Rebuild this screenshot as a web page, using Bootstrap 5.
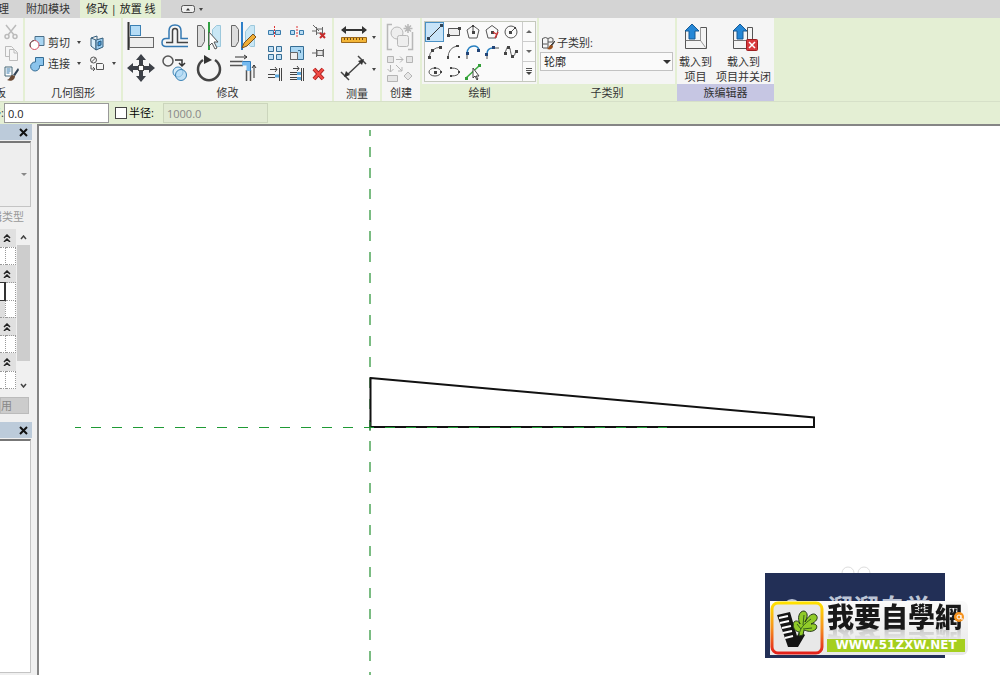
<!DOCTYPE html>
<html lang="zh-CN">
<head>
<meta charset="utf-8">
<meta name="viewport" content="width=device-width, initial-scale=1">
<title>修改 | 放置 线</title>
<link href="https://cdn.jsdelivr.net/npm/bootstrap@5.3.0/dist/css/bootstrap.min.css" rel="stylesheet">
<style>
  :root { --leaf: #e4efd4; --pane: #f5f5f5; }
  body { font: 11px/16px "Open Sans", "Noto Sans CJK SC", sans-serif; color: #333; background: #f0f0f0; }
  svg { display: block; flex: none; }
  button { font: inherit; color: inherit; background: none; border: 0; padding: 0; }
  .tabs { background: #d4d4d4; height: 18px; }
  .tabs a { color: #333; text-decoration: none; padding: 1px 10px; white-space: nowrap; }
  .tabs .first-tab { width: 16px; padding: 1px 7px 1px 0; overflow: hidden; }
  .tabs a.current { background: var(--leaf); padding: 1px 6px; width: 81px; color: #222; }
  .ribbon { background: var(--leaf); height: 84px; gap: 2px; border-bottom: 1px solid #d6e0c8; }
  .panel { background: var(--pane); flex: none; overflow: hidden; }
  .panel-title { height: 17px; line-height: 18px; text-align: center; white-space: nowrap; }
  .panel-title.leaf { background: var(--leaf); }
  .panel-title.lilac { background: #c6c6e3; }
  .w-clip { width: 23px; } .w-geo { width: 96px; } .w-mod { width: 209px; } .w-mea { width: 46px; }
  .w-new { width: 38px; } .w-draw { width: 115px; } .w-sub { width: 136px; } .w-fam { width: 97px; }
  .w-clip .panel-title { width: 6px; }
  .icons { display: grid; place-items: center; align-content: start; }
  .icons button { display: grid; place-items: center; width: 100%; height: 100%; }
  .clip-grid { grid: 21px 21px 21px / 22px; padding-top: 3px; }
  .big-grid { grid: 32px 32px / repeat(4, 34px); padding: 2px 0 0 1px; }
  .small-grid { grid: repeat(3, 21px) / repeat(3, 22px); padding: 3px 0 0 4px; }
  .wide-grid { grid: 32px 32px / 42px; padding-top: 3px; }
  .new-grid { grid: 33px 31px / 36px; padding-top: 2px; }
  .caret { width: 0; height: 0; border: 2px solid transparent; border-top: 3px solid #444; border-bottom: 0; flex: none; }
  .geo-rows { padding-top: 14px; }
  .geo-row { height: 21px; padding-left: 4px; }
  .geo-row button { display: flex; align-items: center; gap: 3px; }
  .geo-row .caret { margin-left: 4px; }
  .gallery { border: 1px solid #c4c8bd; background: #fafafa; height: 61px; margin: 3px 1px 0 2px; }
  .gallery .icons { grid: repeat(3, 20px) / repeat(5, 19px); flex: 1; }
  .gallery .on { background: #c8e4f8; border: 1px solid #4a90c4; }
  .gallery .steps { width: 13px; border-left: 1px solid #ccc; }
  .gallery .steps button { flex: 1; border-bottom: 1px solid #ccc; display: grid; place-items: center; }
  .sub-label { height: 18px; gap: 2px; padding-left: 2px; }
  .select-wrap { width: 133px; margin-left: 1px; }
  .select-wrap::after { content: ""; position: absolute; right: 2px; top: 8px; border: 4px solid transparent; border-top-color: #333; border-bottom: 0; pointer-events: none; }
  .sub-select { width: 100%; height: 19px; border: 1px solid #c2c2c2; background: #fafafa; appearance: none; font: inherit; color: #222; padding: 0 3px; border-radius: 0; }
  .fam { padding: 4px 0 0 2px; gap: 4px; }
  .fam-btn { display: flex; flex-direction: column; align-items: center; line-height: 15px; white-space: nowrap; }
  .options { background: var(--leaf); height: 22px; }
  .options .offset-label { width: 4px; }
  .options .radius-label { width: 34px; margin-left: 2px; }
  .options input[type=text] { font: inherit; border: 1px solid #999; border-radius: 0; height: 20px; width: 105px; padding: 0 3px; background: #fff; color: #222; outline: 0; }
  .options input[type=text]:disabled { background: #e1ead3; border-color: #cbd5bc; color: #888; }
  .options input[type=checkbox] { appearance: none; width: 12px; height: 12px; border: 1px solid #444; background: #fff; margin: 0 0 0 6px; }
  .options input:checked { background: #444; }
  .side { width: 37px; flex: none; background: #f0f0f0; }
  .side-head { background: #bccbda; height: 16px; width: 32px; }
  .selector { width: 31px; height: 66px; border: solid #c4c4c4; border-width: 2px 1px 1px 0; border-top-color: #777; background: #eee; margin: 1px 0 2px; padding-right: 3px; }
  .edit-type { width: 24px; overflow: hidden; white-space: nowrap; color: #999; height: 16px; }
  .prop-box { height: 164px; }
  .props { width: 16px; height: 160px; background: #fff; border-collapse: collapse; table-layout: fixed; }
  .props .name-col { width: 5px; }
  .props th { background: #e0e0e0; height: 18px; padding: 0 0 0 3px; }
  .props td { height: 17px; padding: 0; border: 1px dotted #999; border-left: 0; }
  .props td.focus { border: solid #333; border-width: 1px 2px 1px 0; }
  .props td.grip { background: #ddd; }
  .scroller { width: 13px; margin-left: 1px; }
  .scroller .thumb { background: #cdcdcd; height: 116px; }
  .scroller button { height: 16px; display: grid; place-items: center; }
  .apply { width: 29px; height: 17px; background: #ccc; border: 1px solid #bbb; color: #888; overflow: hidden; }
  .board { background: #fff; border-left: 2px solid #858585; border-top: 2px solid #858585; min-width: 0; overflow: hidden; }
  .stamp { position: absolute; right: 33px; bottom: 17px; width: 202px; height: 92px; }
  .stamp .rings { position: absolute; left: 76px; top: 0; }
  .stamp .dot { position: absolute; left: 17px; top: 25px; }
  .navy { position: absolute; left: 0; top: 7px; width: 180px; height: 85px; background: #222f56; color: #bcc4d5; overflow: hidden; padding: 19px 0 0 62px; font-size: 26px; line-height: 32px; font-weight: 700; white-space: nowrap; }
  .brand { position: absolute; left: 5px; top: 35px; width: 198px; height: 54px; background: linear-gradient(#fafafa, #e8e8e8); border-radius: 0 6px 6px 0; overflow: hidden; }
  .brand-name { position: absolute; left: 57px; top: 0; font: 900 27px/30px "Noto Sans CJK TC", sans-serif; color: #191919; white-space: nowrap; -webkit-box-reflect: below -5px linear-gradient(transparent 50%, rgba(0, 0, 0, .25)); }
  .brand .at { position: absolute; right: 3px; top: 10px; }
  .brand-url { position: absolute; left: 57px; top: 38px; width: 138px; height: 13px; background: #a5cf1f; color: #fff; font: bold 12px/13px "DejaVu Sans", sans-serif; text-align: center; text-decoration: none; white-space: nowrap; }
</style>
</head>
<body class="d-flex flex-column vh-100 overflow-hidden">
<nav class="tabs d-flex" aria-label="功能区">
  <a class="first-tab d-flex justify-content-end" href="#"><span>管理</span></a>
  <a href="#">附加模块</a>
  <a class="current" href="#">修改 | 放置 线</a>
  <button class="d-flex align-items-center gap-1 ms-3 ps-1" aria-label="显示面板">
    <svg width="14" height="8" viewBox="0 0 14 8"><rect x=".5" y=".5" width="13" height="7" rx="2" fill="#eee" stroke="#555"/><path d="M5 5.500 7 3l2 2.500z" fill="#333"/></svg><span class="caret"></span>
  </button>
</nav>

<header class="ribbon d-flex">
  <section class="panel w-clip d-flex flex-column">
    <div class="icons clip-grid flex-grow-1">
      <button aria-label="剪切到剪贴板"><svg width="16" height="16" fill="none" stroke="#bbb" stroke-width="1.500"><path d="M3 1l8 10M13 1 5 11"/><circle cx="4" cy="12.500" r="2"/><circle cx="12" cy="12.500" r="2"/></svg></button>
      <button aria-label="复制"><svg width="16" height="16" fill="#f5f5f5" stroke="#bbb"><path d="M2.500 1.500h6l2 2v8h-8z"/><path d="M6.500 4.500h5l3 3v8h-8zM11 5v3h3"/></svg></button>
      <button aria-label="匹配类型"><svg width="16" height="16"><path d="M2 1h7v9H2z" fill="#fff" stroke="#467"/><path d="M3.500 3h4M3.500 5h4M3.500 7h3" stroke="#37a"/><path d="M15 2 10 9l2 1 4-6z" fill="#345"/><path d="M9 9c-2 1-2 4-5 5 4 2 8 0 8-4z" fill="#6a4a35"/></svg></button>
    </div>
    <div class="panel-title d-flex justify-content-end">剪贴板</div>
  </section>

  <section class="panel w-geo d-flex flex-column">
    <div class="geo-rows flex-grow-1">
      <div class="geo-row d-flex">
        <button><svg width="16" height="16"><path d="M6 1.500h9v9H6z" fill="#a9d5f2" stroke="#4b6f89"/><circle cx="5.500" cy="10" r="4.500" fill="#fff" stroke="#d34d60"/><path d="M1.500 12A4.500 4.500 0 0 1 5 5.500" fill="none" stroke="#555"/></svg>剪切<span class="caret"></span></button>
        <button class="ms-2" aria-label="拆分面"><svg width="16" height="16" stroke="#345d7a"><path d="M2 3l5 2v10l-5-4z" fill="#d8edf9"/><path d="M7 5l7-2v9l-7 3z" fill="#9bcdf0"/><path d="M9 7l3-1v4l-3 1z" fill="#3f9be0"/><path d="M2 3l6-2v3" fill="none"/></svg></button>
      </div>
      <div class="geo-row d-flex">
        <button><svg width="16" height="16"><path d="M6.500 1.500h8v8h-4A4.500 4.500 0 1 1 6.500 6z" fill="#8bc4ec" stroke="#346c94"/></svg>连接<span class="caret"></span></button>
        <button class="ms-2" aria-label="连接端切割"><svg width="16" height="16" fill="none" stroke="#555"><circle cx="4.500" cy="4" r="3"/><path d="M2.500 6l4-4M7.500 7.500h6l1 1v5h-7zM2 9v4h4M4 11l2 2-2 2"/></svg><span class="caret"></span></button>
      </div>
    </div>
    <div class="panel-title">几何图形</div>
  </section>

  <section class="panel w-mod d-flex flex-column">
    <div class="d-flex flex-grow-1">
      <div class="icons big-grid">
        <button aria-label="对齐"><svg width="28" height="28"><path d="M1.500 0v28" stroke="#333" stroke-width="2"/><rect x="3.500" y="3.500" width="10" height="10" fill="#b5dcf6" stroke="#3c80b3"/><rect x="2.500" y="15.500" width="24" height="10" fill="#eee" stroke="#666"/></svg></button>
        <button aria-label="偏移"><svg width="28" height="28" fill="none"><path d="M27 24.500H5q-4 0-4-4t4-4h3V9q0-6 6-6t6 6v7.500h7" stroke="#3479b3" stroke-width="1.500"/><path d="M27 20.500H16.500V9q0-2.500-2.500-2.500T11.500 9v11.500H5" stroke="#444" stroke-width="1.500"/></svg></button>
        <button aria-label="镜像 - 拾取轴"><svg width="28" height="28"><path d="M2.500 3.500h4l3 4v12l-3 5h-4z" fill="#ddd" stroke="#666"/><path d="M25.500 3.500h-4l-4 4v12l4 5h4z" fill="#c9e7f5" stroke="#9cc8dc"/><path d="M14 0v28" stroke="#31a041" stroke-width="2"/><path d="M14 10v14l3-3 3 6 2-1-3-6h4z" fill="#fff" stroke="#555"/></svg></button>
        <button aria-label="镜像 - 绘制轴"><svg width="28" height="28"><path d="M2.500 3.500h4l3 4v12l-3 5h-4z" fill="#ddd" stroke="#666"/><path d="M25.500 3.500h-4l-5 6v10l5 5h4z" fill="#c9e7f5" stroke="#9cc8dc"/><path d="M13 0v28" stroke="#2f80c9" stroke-width="2"/><path d="M13 26l2-5 9-9 3 3-9 9z" fill="#f0ae36" stroke="#765020"/></svg></button>
        <button aria-label="移动"><svg width="28" height="28" fill="#3d4148"><path d="M14 0l5 6h-3v5h-4V6H9zM14 28l5-6h-3v-5h-4v5H9zM0 14l6-5v3h5v4H6v3zM28 14l-6-5v3h-5v4h5v3z"/><rect x="11.500" y="11.500" width="5" height="5" fill="#fff" stroke="#444"/></svg></button>
        <button aria-label="复制"><svg width="28" height="28"><circle cx="7" cy="7" r="5" fill="#f5f5f5" stroke="#555" stroke-width="1.500"/><path d="M14 6h7v5m-3-2 3 3 3-3" fill="none" stroke="#333" stroke-width="1.500"/><circle cx="17" cy="18" r="5" fill="#d6ecfa" stroke="#3b83b5"/><circle cx="20" cy="21" r="5.500" fill="#a9d7f5" fill-opacity=".7" stroke="#3b83b5"/></svg></button>
        <button aria-label="旋转"><svg width="28" height="28"><path d="M8 6A11 11 0 1 0 20 6" fill="none" stroke="#444" stroke-width="2.500"/><path d="M9 1v9l8-4z" fill="#333"/></svg></button>
        <button aria-label="修剪/延伸为角"><svg width="28" height="28" fill="none"><path d="M1 7.500h13M1 11.500h13M17.500 16v11M21.500 16v11" stroke="#555" stroke-width="1.500"/><path d="M13 9.500h6.500V17" stroke="#75baf0" stroke-width="4"/><path d="M14 7.500h7.500V17" stroke="#2e79b8"/><path d="M6 3h12m-3-2 3 2-3 2M25 24V11m-2 3 2-3 2 3" stroke="#333"/></svg></button>
      </div>
      <div class="icons small-grid">
        <button aria-label="拆分图元"><svg width="16" height="16"><path d="M1.500 6.500h5v4h-5zM8.500 6.500h5v4h-5z" fill="#b9dcf3" stroke="#387bab"/><path d="M7.500 2v12" stroke="#d33" stroke-dasharray="2 1"/></svg></button>
        <button aria-label="用间隙拆分"><svg width="16" height="16"><path d="M1.500 6.500h4v4h-4zM10.500 6.500h4v4h-4z" fill="#b9dcf3" stroke="#387bab"/><path d="M8 2v12" stroke="#d33" stroke-dasharray="2 1"/></svg></button>
        <button aria-label="解锁"><svg width="16" height="16" fill="none" stroke="#666"><path d="M1 7h4M5.500 3v8M6 5h5M6 9h5M11.500 3v8M2 1l6 6"/><path d="M9 9l5 5M14 9l-5 5" stroke="#c62a2a" stroke-width="2"/></svg></button>
        <button aria-label="阵列"><svg width="16" height="16" fill="#c0e0f6" stroke="#356d94"><path d="M1.500 1.500h5v5h-5zM9.500 1.500h5v5h-5zM1.500 9.500h5v5h-5zM9.500 9.500h5v5h-5z"/></svg></button>
        <button aria-label="缩放"><svg width="16" height="16"><path d="M1.500 1.500h13v13h-13z" fill="#a9d6f2" stroke="#356d94"/><path d="M1.500 7.500h7v7h-7z" fill="#eee" stroke="#666"/><path d="M9 5.500h2.500V8" fill="none" stroke="#356d94"/></svg></button>
        <button aria-label="锁定"><svg width="16" height="16" fill="#e5e5e5" stroke="#666"><path d="M1 8h4M5.500 4v8M6 5.500h6v5H6zM12.500 4v8"/></svg></button>
        <button aria-label="修剪单个图元"><svg width="16" height="16" fill="none" stroke="#444"><path d="M3 3.500h7M8 1l2 2.500L8 6M1 8.500h7M1 11.500h7"/><path d="M8 10h4" stroke="#5ba8dd" stroke-width="3"/><path d="M12.500 2v13M14.500 2v13"/></svg></button>
        <button aria-label="修剪多个图元"><svg width="16" height="16" fill="none" stroke="#444"><path d="M4 2.500h6M8 0l2 2.500L8 5M1 6.500h7M1 8.500h7M1 11.500h7M1 13.500h7"/><path d="M8 7.500h4M8 12.500h4" stroke="#5ba8dd" stroke-width="3"/><path d="M12.500 2v13M14.500 2v13"/></svg></button>
        <button aria-label="删除"><svg width="16" height="16"><path d="M3 3l9 10M12 3 3 13" stroke="#a92222" stroke-width="4"/><path d="M3 3l9 10M12 3 3 13" stroke="#f24b45" stroke-width="2"/></svg></button>
      </div>
    </div>
    <div class="panel-title">修改</div>
  </section>

  <section class="panel w-mea d-flex flex-column">
    <div class="icons wide-grid flex-grow-1">
      <button class="d-flex align-items-center justify-content-end gap-1" aria-label="测量"><svg width="28" height="28"><path d="M2 7h24" stroke="#333" stroke-width="2"/><path d="M1 7l5-4v8zM27 7l-5-4v8z" fill="#333"/><path d="M1.500 14.500h25v5h-25z" fill="#f3b536" stroke="#9b681c"/><path d="M4.500 15v2M7.500 15v2M10.500 15v2M13.500 15v2M16.500 15v2M19.500 15v2M22.500 15v2" stroke="#704a16"/></svg><span class="caret"></span></button>
      <button class="d-flex align-items-center justify-content-end gap-1" aria-label="对齐尺寸标注"><svg width="28" height="28"><path d="M6 21 22 6M1 17l8 8M18 1l8 8" stroke="#444" stroke-width="1.500"/><path d="M4 22l2-6 4 4zM24 4l-2 6-4-4z" fill="#333"/></svg><span class="caret"></span></button>
    </div>
    <div class="panel-title">测量</div>
  </section>

  <section class="panel w-new d-flex flex-column">
    <div class="icons new-grid flex-grow-1">
      <button aria-label="创建组"><svg width="28" height="28" fill="#eee" stroke="#b8b8b8"><path d="M6 1.500H1.500v25H6M22 26.500h4.500V9" fill="none" stroke-width="1.500"/><circle cx="11" cy="10" r="6"/><rect x="11.500" y="12.500" width="11" height="11" rx="2"/><path d="M22 1v9M17.500 5.500h9M19 2.500l6 6M25 2.500l-6 6" stroke-width="1.500"/></svg></button>
      <button aria-label="创建类似"><svg width="28" height="28" fill="#e6e6e6" stroke="#b5b5b5"><path d="M1.500 1.500h6v6h-6zM20.500 1.500h6v6h-6zM1.500 20.500h10v6h-10zM22 17l4 4-4 4-4-4z"/><path d="M10 4.500h7m-3-3 3 3-3 3M4.500 10v7m-3-3 3 3 3-3M10 10l6 6m0-4v4h-4" fill="none"/></svg></button>
    </div>
    <div class="panel-title">创建</div>
  </section>

  <section class="panel w-draw d-flex flex-column">
    <div class="flex-grow-1">
      <div class="gallery d-flex">
        <div class="icons">
          <button class="on" aria-label="线"><svg width="16" height="16"><path d="M2 14 14 2" stroke="#333"/><path d="M0 13h3v3H0zM13 0h3v3h-3z" fill="#345"/></svg></button>
          <button aria-label="矩形"><svg width="16" height="16"><path d="M2.500 4.500h11v7h-11z" fill="#eee" stroke="#555"/><path d="M1 10h3v3H1zM12 3h3v3h-3z" fill="#444"/></svg></button>
          <button aria-label="内接多边形"><svg width="16" height="16" fill="none" stroke="#555"><path d="M8 1.500 14 6l-2 8H4L2 6zM8 8V2"/><path d="M7 7h3v3H7zM7 1h2v2H7z" fill="#444" stroke="none"/></svg></button>
          <button aria-label="外接多边形"><svg width="16" height="16" fill="none" stroke="#555"><path d="M8 1.500 14 6l-2 8H4L2 6z"/><path d="M7 7h3v3H7z" fill="#444" stroke="none"/><path d="M9 8l3 2m2-2-3 6" stroke="#c33" stroke-width="1.500"/></svg></button>
          <button aria-label="圆形"><svg width="16" height="16" fill="none" stroke="#555"><circle cx="8" cy="8" r="6"/><path d="M8 8l4-4"/><path d="M6 7h3v3H6zM11 3h2v2h-2z" fill="#444" stroke="none"/></svg></button>
          <button aria-label="起点-终点-半径弧"><svg width="16" height="16"><path d="M2 14Q3 4 14 3" fill="none" stroke="#666"/><path d="M1 12h3v3H1zM4 5h3v3H4zM12 2h3v3h-3z" fill="#444"/></svg></button>
          <button aria-label="圆心-端点弧"><svg width="16" height="16"><path d="M2 14Q2 4 11 2" fill="none" stroke="#666"/><path d="M1 12h2v3H1zM10 1h3v2h-3zM12 12h2v2h-2z" fill="#444"/></svg></button>
          <button aria-label="相切弧"><svg width="16" height="16"><path d="M2 9Q3 2 9 2q4 0 5 4" fill="none" stroke="#277fc0" stroke-width="1.500"/><path d="M2 10v5" stroke="#444"/><path d="M1 8h3v3H1zM12 5h3v3h-3z" fill="#247"/></svg></button>
          <button aria-label="圆角弧"><svg width="16" height="16"><path d="M3 10q0-6 6-6" fill="none" stroke="#277fc0" stroke-width="1.500"/><path d="M3 10v5M9 4h6" stroke="#555"/><path d="M1 9h3v3H1zM8 2h3v3H8z" fill="#247"/></svg></button>
          <button aria-label="样条曲线"><svg width="16" height="16"><path d="M2 9C4 4 4 2 6 3s1 9 4 9 1-5 4-4" fill="none" stroke="#555"/><path d="M1 8h3v3H1zM4 2h3v3H4zM8 11h3v3H8zM12 6h3v3h-3z" fill="#444"/></svg></button>
          <button aria-label="椭圆"><svg width="16" height="16" fill="none" stroke="#555"><ellipse cx="8" cy="8" rx="6" ry="4"/><path d="M7 7h3v3H7zM7 3h2v2H7zM13 7h2v2h-2z" fill="#444" stroke="none"/></svg></button>
          <button aria-label="半椭圆"><svg width="16" height="16"><path d="M5 4q8 0 8 4t-8 4" fill="none" stroke="#555"/><path d="M4 3h2v2H4zM4 11h2v2H4zM12 7h2v2h-2z" fill="#444"/></svg></button>
          <button aria-label="拾取线"><svg width="16" height="16"><path d="M1 14 14 2" stroke="#38aa3c" stroke-width="1.500"/><path d="M0 13h3v3H0zM13 0h3v3h-3z" fill="#329f38"/><path d="M8 4v10l2-2 2 4 1-1-2-3h3z" fill="#fff" stroke="#444"/></svg></button>
        </div>
        <div class="steps d-flex flex-column">
          <button aria-label="上一行"><svg width="6" height="3"><path d="M0 3 3 0l3 3z" fill="#666"/></svg></button>
          <button aria-label="下一行"><svg width="6" height="3"><path d="M0 0l3 3 3-3z" fill="#666"/></svg></button>
          <button class="border-0" aria-label="更多"><svg width="6" height="7"><path d="M0 .5h6M0 2.500h6" stroke="#555"/><path d="M0 4l3 3 3-3z" fill="#444"/></svg></button>
        </div>
      </div>
    </div>
    <div class="panel-title leaf">绘制</div>
  </section>

  <section class="panel w-sub d-flex flex-column">
    <div class="flex-grow-1 pt-3">
      <label for="sub" class="sub-label d-flex align-items-center"><svg width="14" height="14"><path d="M1.500 12V2.500q3-2 5.500 0 3-2 5 0V6M7 3v9M1.500 8h5M7 6h5M2 12h5" fill="none" stroke="#555"/><path d="M14 5 9 10l1 1z" fill="#444" stroke="#444"/><path d="M10 9c-2 0-2 3-4 4 3 1 6 0 6-3z" fill="#98511f"/></svg>子类别:</label>
      <div class="select-wrap position-relative"><select id="sub" class="sub-select"><option>轮廓</option></select></div>
    </div>
    <div class="panel-title leaf">子类别</div>
  </section>

  <section class="panel w-fam d-flex flex-column">
    <div class="fam d-flex flex-grow-1 align-items-start">
      <button class="fam-btn"><svg width="28" height="32"><path d="M3.500 9V26.500h21v-21h-6v13h-15" fill="#f4f4f4" stroke="#555"/><path d="M18.500 5v13.500l5 7" fill="none" stroke="#999"/><path d="M3.500 18.500h15" stroke="#777"/><path d="M10 2l7 7h-4v8H7V9H3z" fill="#2587d6" stroke="#175b96"/></svg>载入到<br>项目</button>
      <button class="fam-btn"><svg width="28" height="32"><path d="M3.500 9V26.500h19v-21h-5v13h-14" fill="#f4f4f4" stroke="#555"/><path d="M3.500 18.500h14" stroke="#777"/><path d="M10 2l7 7h-4v8H7V9H3z" fill="#2587d6" stroke="#175b96"/><rect x="16.500" y="17.500" width="11" height="11" rx="1" fill="#d8373b" stroke="#9c1f22"/><path d="M19 20l6 6M25 20l-6 6" stroke="#fff" stroke-width="1.500"/></svg>载入到<br>项目并关闭</button>
    </div>
    <div class="panel-title lilac">族编辑器</div>
  </section>
</header>

<form class="options d-flex align-items-center">
  <label for="offset" class="offset-label d-flex justify-content-end overflow-hidden"><span class="text-nowrap">偏移:</span></label>
  <input id="offset" type="text" value="0.0">
  <input id="use-radius" type="checkbox"><label for="use-radius" class="radius-label text-black text-nowrap">半径:</label>
  <input type="text" value="1000.0" aria-label="半径值" disabled>
</form>

<div class="d-flex flex-grow-1 overflow-hidden">
  <aside class="side d-flex flex-column">
    <div class="side-head d-flex align-items-center justify-content-end pe-1"><button aria-label="关闭属性"><svg width="9" height="9"><path d="M1 1l7 7M8 1 1 8" stroke="#111" stroke-width="2"/></svg></button></div>
    <div class="selector d-flex align-items-center justify-content-end"><svg width="6" height="3"><path d="M0 0l3 3 3-3z" fill="#888"/></svg></div>
    <button class="edit-type d-flex justify-content-end"><span>编辑类型</span></button>
    <div class="prop-box d-flex align-items-start mt-1">
      <table class="props">
        <colgroup><col class="name-col"><col></colgroup>
        <tbody>
        <tr><th colspan="2"><svg width="8" height="8" fill="none" stroke="#222" stroke-width="1.500"><path d="M1 4l3-3 3 3M1 8l3-3 3 3"/></svg></th></tr>
        <tr><td></td><td></td></tr>
        <tr><th colspan="2"><svg width="8" height="8" fill="none" stroke="#222" stroke-width="1.500"><path d="M1 4l3-3 3 3M1 8l3-3 3 3"/></svg></th></tr>
        <tr><td class="focus"></td><td></td></tr>
        <tr><td class="grip"></td><td></td></tr>
        <tr><th colspan="2"><svg width="8" height="8" fill="none" stroke="#222" stroke-width="1.500"><path d="M1 4l3-3 3 3M1 8l3-3 3 3"/></svg></th></tr>
        <tr><td></td><td></td></tr>
        <tr><th colspan="2"><svg width="8" height="8" fill="none" stroke="#222" stroke-width="1.500"><path d="M1 4l3-3 3 3M1 8l3-3 3 3"/></svg></th></tr>
        <tr><td></td><td></td></tr>
        </tbody>
      </table>
      <div class="scroller d-flex flex-column align-self-stretch">
        <button aria-label="向上"><svg width="7" height="5"><path d="M1 4l2.500-3L6 4" fill="none" stroke="#444" stroke-width="1.500"/></svg></button>
        <div class="thumb"></div>
        <button class="mt-auto" aria-label="向下"><svg width="7" height="5"><path d="M1 1l2.500 3L6 1" fill="none" stroke="#444" stroke-width="1.500"/></svg></button>
      </div>
    </div>
    <button class="apply d-flex align-items-center mt-1"><span>用</span></button>
    <div class="side-head d-flex align-items-center justify-content-end pe-1 mt-2"><button aria-label="关闭项目浏览器"><svg width="9" height="9"><path d="M1 1l7 7M8 1 1 8" stroke="#111" stroke-width="2"/></svg></button></div>
    <div class="selector flex-grow-1 bg-white"></div>
  </aside>

  <main class="board flex-grow-1 position-relative">
    <svg width="100%" height="100%" fill="none">
      <path d="M331 4v6M331 21V560" stroke="#4fa75a" stroke-width="1.500" stroke-dasharray="10 11"/>
      <path d="M331.500 252 775 291.500v9.500H331.500z" stroke="#111" stroke-width="2"/>
      <path d="M36 301.500h6" stroke="#1f9a35"/>
      <path d="M52 301.500H628" stroke="#1f9a35" stroke-dasharray="10 11"/>
      <path d="M331 296v9" stroke="#277a35"/>
    </svg>
    <div class="stamp">
      <svg class="rings" width="32" height="10" fill="none" stroke="#ddd"><circle cx="7" cy="7" r="6"/><circle cx="23" cy="7" r="6"/></svg>
      <div class="navy">溜溜自学<svg class="dot" width="20" height="20"><circle cx="10" cy="10" r="9" fill="#bcc4d5"/></svg></div>
      <div class="brand">
        <svg width="54" height="54"><defs><linearGradient id="rim" x2="0" y2="1"><stop stop-color="#ffe100"/><stop offset=".5" stop-color="#f6921e"/><stop offset="1" stop-color="#e3201b"/></linearGradient></defs>
          <rect x="2" y="2" width="50" height="50" rx="6" fill="#e8e8e8" stroke="url(#rim)" stroke-width="3"/>
          <path d="M7 14l13-3 7 24 3-5 5 4-7 12H18z" fill="#151515"/>
          <path d="M9 17l9-2M10 22l9-2M12 27l9-2M13 32l9-2M15 37l8-2" stroke="#fff" stroke-width="2"/>
          <path d="M29 31c-5-1-7-6-5-10 2-2 5-1 6 2-3-6-1-13 4-13 4 1 4 6 1 11 3-6 8-10 11-7s0 7-5 9c5-1 7 2 5 5-4 4-9 2-12 1l-1 5-4 1z" fill="#91cb28" stroke="#26391a"/>
          <path d="M29 34c1-7 5-11 12-16M31 28l-4-5M33 24l1-10M33 28l9-1" stroke="#35601c" fill="none"/></svg>
        <div class="brand-name">我要自學網</div>
        <svg class="at" width="12" height="12" fill="none"><circle cx="6" cy="6" r="5" fill="#f7931e"/><circle cx="6" cy="6" r="2" stroke="#fff"/><path d="M8 4v4h2" stroke="#fff"/></svg>
        <a class="brand-url" href="#">WWW.51ZXW.NET</a>
      </div>
    </div>
  </main>
</div>
<script src="https://cdn.jsdelivr.net/npm/bootstrap@5.3.0/dist/js/bootstrap.bundle.min.js"></script>
</body>
</html>
